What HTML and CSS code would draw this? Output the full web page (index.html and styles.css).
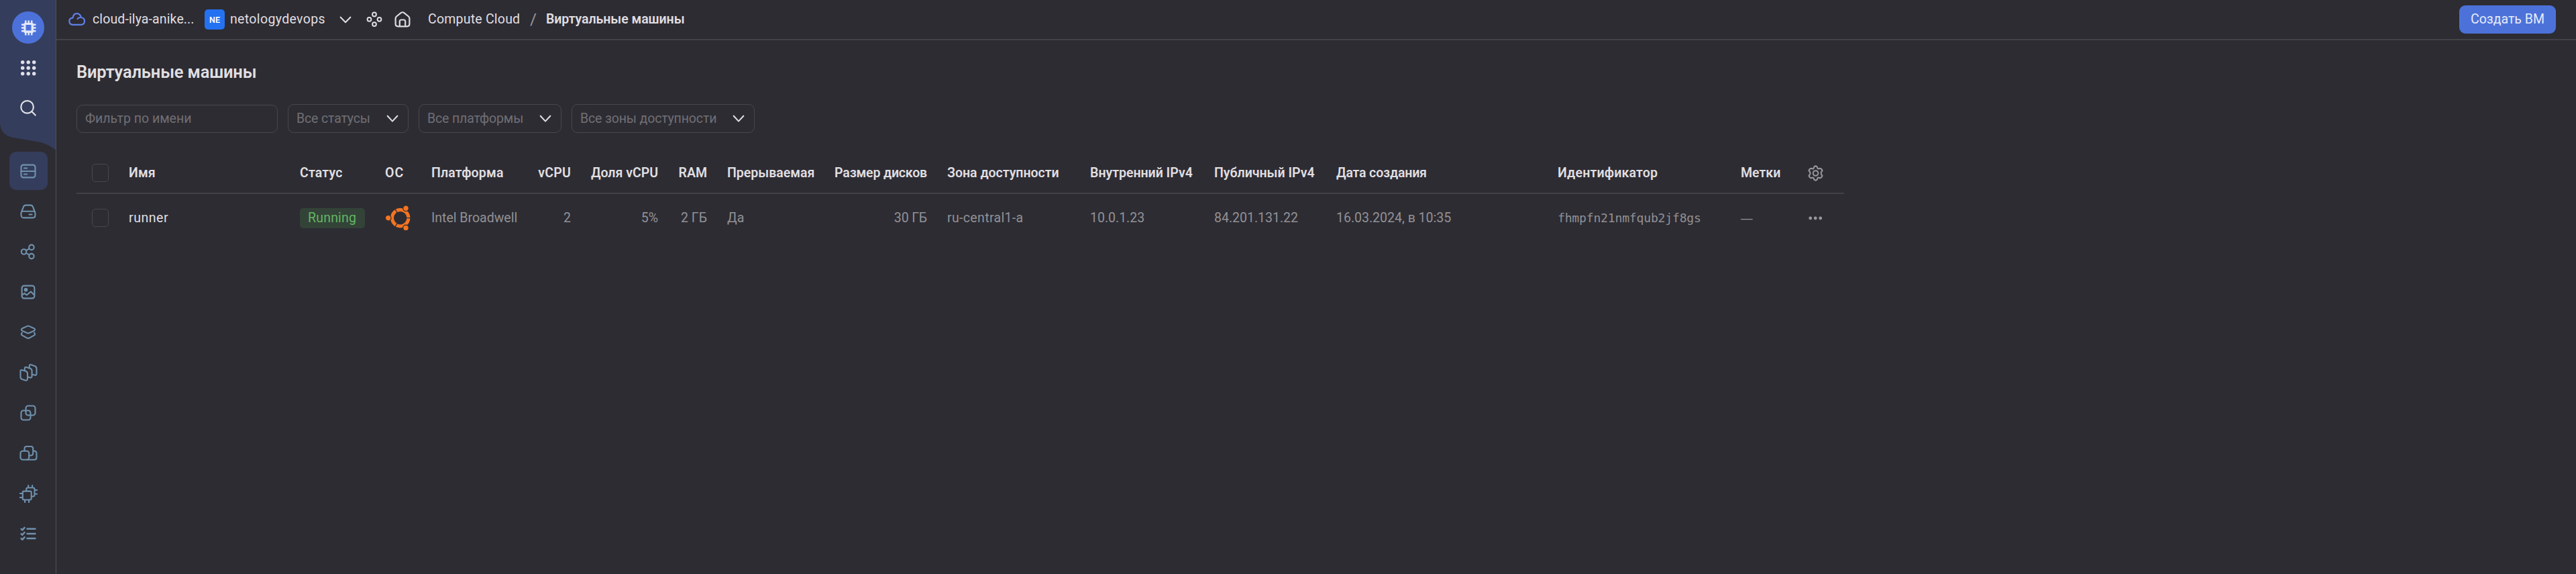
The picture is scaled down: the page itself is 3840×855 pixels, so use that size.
FILE: index.html
```html
<!DOCTYPE html>
<html lang="ru">
<head>
<meta charset="utf-8">
<title>Виртуальные машины</title>
<link rel="stylesheet" href="styles.css">
</head>
<body>
<div class="app">
  <aside class="sidebar">
    <svg class="sidebar-shape" width="83" height="224" viewBox="0 0 83 224"><path fill="#353d5c" d="M0 0H83V223C76 218 68 213.500 58 211.500L20 205C8 203 0 195 0 183Z"/></svg>
    <div class="nav-item nav-logo">
      <svg width="48" height="48" viewBox="0 0 48 48"><circle cx="24" cy="24" r="24" fill="#4c72d9"/><path fill="#e4e8f7" fill-rule="evenodd" d="M19 13.500h2.500V17h2V13.500H26V17h2V13.500h2.500V17.200Q32 17.500 32 18.500H35.500V21H32v2.200h3.500v2.600H32V28h3.500v2.500H32Q32 32 30.500 32V35.500H28V32H26v3.500H23.500V32h-2v3.500H19V32Q17.400 32 17.400 30.500H14V28h3.400V25.800H14V23.200h3.400V21H14V18.500h3.400Q17.400 17 19 17ZM20.500 20v8.500h8V20Z"/></svg>
    </div>
    <div class="nav-item nav-top">
      <svg width="24" height="24" viewBox="0 0 24 24" fill="#e0e1e8"><circle cx="3.700" cy="3.700" r="2.700"/><circle cx="12.200" cy="3.700" r="2.700"/><circle cx="20.700" cy="3.700" r="2.700"/><circle cx="3.700" cy="12.200" r="2.700"/><circle cx="12.200" cy="12.200" r="2.700"/><circle cx="20.700" cy="12.200" r="2.700"/><circle cx="3.700" cy="20.700" r="2.700"/><circle cx="12.200" cy="20.700" r="2.700"/><circle cx="20.700" cy="20.700" r="2.700"/></svg>
    </div>
    <div class="nav-item nav-top">
      <svg width="24" height="24" viewBox="0 0 24 24" fill="none" stroke="#e0e1e8" stroke-width="2.200" stroke-linecap="round"><circle cx="10.600" cy="10.400" r="9.300"/><path d="M17.500 17.300L22.700 22.500"/></svg>
    </div>
    <nav class="nav">
      <div class="nav-item nav-active"><svg class="icon" viewBox="0 0 16 16"><rect x="1" y="1.750" width="14" height="12.500" rx="2.250"/><path d="M1 8H15M4 5H6.800M4 11H6.800"/></svg></div>
      <div class="nav-item"><svg class="icon" viewBox="0 0 16 16"><path d="M1.300 8.500L3.400 3.300Q4 1.750 5.500 1.750h5Q12 1.750 12.600 3.300L14.700 8.500Q15 9.300 15 10.200V11.500Q15 14.250 12.500 14.250h-9Q1 14.250 1 11.500V10.200Q1 9.300 1.300 8.500ZM1.700 7.800H14.300M9 11H11.800"/></svg></div>
      <div class="nav-item"><svg class="icon" viewBox="0 0 16 16"><circle cx="3.700" cy="8" r="2.500"/><circle cx="11.300" cy="3.600" r="2.500"/><circle cx="11.300" cy="12.400" r="2.500"/><path d="M5.900 6.700L9.100 4.900M5.900 9.300L9.100 11.100"/></svg></div>
      <div class="nav-item"><svg class="icon" viewBox="0 0 16 16"><rect x="1.750" y="1.750" width="12.500" height="12.500" rx="2.250"/><circle cx="5.700" cy="5.700" r="1.200" class="solid"/><path d="M2 11L4.300 9.300L6.500 11L10.700 7.600L14 10.800"/></svg></div>
      <div class="nav-item"><svg class="icon" viewBox="0 0 16 16"><path d="M7 1.900Q8 1.500 9 1.900L14 4.200Q15.500 5.300 14 6.400L9 8.700Q8 9.100 7 8.700L2 6.400Q.5 5.300 2 4.200ZM2 8.400Q.5 9.900 2 10.900L7 13.700Q8 14.100 9 13.700L14 10.900Q15.500 9.900 14 8.400"/></svg></div>
      <div class="nav-item"><svg class="icon icon-wide" viewBox="0 0 18 18"><path d="M2.600 6.100L6.100 7.200Q8 7.800 8 9.500V14.500Q8 17 5.800 16.300L2.700 15.300Q1 14.700 1 13V7.300Q1 5.600 2.600 6.100ZM5.200 6.500V4.700Q5.200 2.800 7 3.300L10.600 4.500Q12.400 5.200 12.400 7V12Q12.400 14 10.800 13.700L8.300 13M9.900 4V2Q9.900.4 11.500.9L15.200 2.100Q17 2.800 17 4.500V9.500Q17 11.500 15.300 11.200L12.700 10.500"/></svg></div>
      <div class="nav-item"><svg class="icon" viewBox="0 0 16 16"><rect x="5.700" y="1" width="9.300" height="9.300" rx="2.200"/><rect x="1" y="5.700" width="9.300" height="9.300" rx="2.200"/></svg></div>
      <div class="nav-item"><svg class="icon icon-wide" viewBox="0 0 18 18"><rect x="1" y="6.500" width="8.500" height="8.700" rx="2.200"/><path d="M5 6.300V4.200Q5 2 7.200 2H11.300Q13.500 2 13.500 4.200V8.500Q13.500 11 11.300 11H9.700M13.700 6.500H14.500Q17 6.500 17 9V13Q17 15.200 14.800 15.200H7.500"/></svg></div>
      <div class="nav-item"><svg class="icon icon-wide" viewBox="0 0 18 18"><rect x="3.200" y="6.400" width="8.600" height="8.600" rx="1.300"/><path d="M6.800 6.200V4.500Q6.800 3 8.300 3H13.500Q15 3 15 4.500V10Q15 11.700 13.300 11.700H12M8.800 3V.7M12.800 3V.7M15.200 5.300H17.500M15.200 9.200H17.500M3 8.700H.6M3 12.700H.6M5.400 15.200V17.500M9.400 15.200V17.500"/></svg></div>
      <div class="nav-item"><svg class="icon" viewBox="0 0 16 16"><path stroke-width="1.600" d="M7 3.200H15M7 8H15M7 12.700H15M1.100 3.300L2.200 4.400L4.400 1.900M1.100 8.100L2.200 9.200L4.400 6.700M1.100 12.800L2.200 13.900L4.400 11.400"/></svg></div>
    </nav>
  </aside>
  <div class="main">
    <header class="topbar">
      <svg class="cloud" width="26" height="20" viewBox="0 0 26 20" fill="none" stroke="#6080e8" stroke-width="2.200" stroke-linecap="round" stroke-linejoin="round"><path d="M6.500 7.700Q7.500 1.200 12.500 1.200Q17.500 1.200 18.800 7Q24 7.500 24 12.500Q24 17.800 18.500 17.800H6.500Q1.300 17.800 1.300 12.600Q1.300 8 6.500 7.700ZM18.500 7Q14.500 6.800 13.500 9.200"/></svg>
      <span class="org">cloud-ilya-anike...</span>
      <span class="badge">NE</span>
      <span class="folder">netologydevops</span>
      <svg class="folder-arrow" width="18" height="11" viewBox="0 0 18 11"><path class="arrow" d="M1.700 1.700L9 9.200L16.300 1.700"/></svg>
      <svg class="services" width="24" height="24" viewBox="0 0 24 24" fill="none" stroke="#dddcde" stroke-width="2"><circle cx="12" cy="4.500" r="2.900"/><circle cx="4.500" cy="11.800" r="2.900"/><circle cx="19.500" cy="11.800" r="2.900"/><circle cx="12" cy="19.100" r="2.900"/></svg>
      <svg class="home" width="24" height="24" viewBox="0 0 24 24" fill="none" stroke="#dddcde" stroke-width="2.200" stroke-linejoin="round"><path d="M1.600 10.500Q1.600 8.700 3 7.500L10 1.900Q12 .6 14 1.900L21 7.500Q22.400 8.700 22.400 10.500V18.500Q22.400 22.300 18.600 22.300H5.400Q1.600 22.300 1.600 18.500ZM7.800 22V15Q7.800 12.500 10.300 12.500H13.700Q16.200 12.500 16.200 15V22"/></svg>
      <span class="crumb">Compute Cloud</span>
      <span class="slash">/</span>
      <span class="crumb-current">Виртуальные машины</span>
      <button class="create">Создать ВМ</button>
    </header>
    <main class="content">
      <h1 class="title">Виртуальные машины</h1>
      <div class="filters">
        <div class="input">Фильтр по имени</div>
        <div class="select select-status"><span>Все статусы</span><svg width="18" height="12" viewBox="0 0 18 12"><path class="arrow" d="M1.700 1.700L9 9.600L16.300 1.700"/></svg></div>
        <div class="select select-platform"><span>Все платформы</span><svg width="18" height="12" viewBox="0 0 18 12"><path class="arrow" d="M1.700 1.700L9 9.600L16.300 1.700"/></svg></div>
        <div class="select select-zone"><span>Все зоны доступности</span><svg width="18" height="12" viewBox="0 0 18 12"><path class="arrow" d="M1.700 1.700L9 9.600L16.300 1.700"/></svg></div>
      </div>
      <div class="table">
        <div class="row head">
          <div class="check"><span class="box"></span></div>
          <div class="spaced">Имя</div><div class="spaced">Статус</div><div class="os">ОС</div><div class="spaced">Платформа</div>
          <div class="num spaced">vCPU</div><div class="num">Доля vCPU</div><div class="num">RAM</div>
          <div class="pad">Прерываемая</div><div class="num tight">Размер дисков</div><div class="pad">Зона доступности</div>
          <div class="pad">Внутренний IPv4</div><div class="pad">Публичный IPv4</div><div class="pad tight">Дата создания</div>
          <div class="pad spaced">Идентификатор</div><div class="pad">Метки</div>
          <div class="pad"><svg class="gear" width="23" height="24" viewBox="0 0 23 24" fill="none" stroke="#98979b" stroke-width="2" stroke-linejoin="round"><path d="M9.300 2.400Q11.500.4 13.700 2.400L14.500 5Q15 5.400 15.600 5.500L18.200 4.800Q21 5.600 21.500 8.400L19.700 10.500V13.500L21.500 15.600Q21 18.400 18.200 19.200L15.600 18.500Q15 18.600 14.500 19L13.700 21.600Q11.500 23.600 9.300 21.600L8.500 19Q8 18.600 7.400 18.500L4.800 19.200Q2 18.400 1.500 15.600L3.300 13.500V10.500L1.500 8.400Q2 5.600 4.800 4.800L7.400 5.500Q8 5.400 8.500 5Z"/><circle cx="11.500" cy="12" r="3.800"/></svg></div>
        </div>
        <div class="row">
          <div class="check"><span class="box"></span></div>
          <div class="name">runner</div><div><span class="status">Running</span></div>
          <div><svg class="ubuntu" width="38" height="38" viewBox="0 0 38 38"><circle cx="22.700" cy="18.700" r="12.200" fill="none" stroke="#f47421" stroke-width="5"/><path stroke="#2d2c33" stroke-width="1.300" d="M31 18.700H39M18.500 11.500L14.600 4.700M18.500 25.900L14.600 32.700"/><g fill="#f47421" stroke="#2d2c33" stroke-width="1.200"><circle cx="4.700" cy="18.700" r="4.300"/><circle cx="31" cy="4.200" r="4.300"/><circle cx="31" cy="33.400" r="4.300"/></g></svg></div>
          <div>Intel Broadwell</div><div class="num">2</div><div class="num">5%</div><div class="num">2 ГБ</div>
          <div class="pad">Да</div><div class="num tight">30 ГБ</div><div class="pad zone">ru-central1-a</div>
          <div class="pad">10.0.1.23</div><div class="pad">84.201.131.22</div><div class="pad">16.03.2024, в 10:35</div>
          <div class="pad id">fhmpfn21nmfqub2jf8gs</div><div class="pad dash">—</div>
          <div class="pad"><svg width="23" height="6" viewBox="0 0 23 6" fill="#98979b"><circle cx="3.700" cy="3" r="2.400"/><circle cx="11.200" cy="3" r="2.400"/><circle cx="18.700" cy="3" r="2.400"/></svg></div>
        </div>
      </div>
    </main>
  </div>
</div>
</body>
</html>
```
FILE: styles.css
```css
* { box-sizing: border-box; }
body {
  margin: 0;
  background: #2d2c33;
  color: #e0dfe1;
  font: 19.5px/30px Roboto, "Liberation Sans", sans-serif;
}
svg { display: block; flex: none; }
.app { display: flex; height: 855px; }

.sidebar {
  position: relative;
  width: 84px;
  flex: none;
  border-right: 1px solid #515056;
  display: flex;
  flex-direction: column;
  padding-top: 11px;
}
.sidebar-shape { position: absolute; left: 0; top: 0; }
.nav-item {
  position: relative;
  height: 60px;
  padding-left: 1px;
  display: flex;
  align-items: center;
  justify-content: center;
}
.nav { padding-top: 34px; }
.nav-active::before {
  content: "";
  position: absolute;
  left: 14px;
  top: 1px;
  width: 57px;
  height: 57px;
  border-radius: 10px;
  background: #353d5c;
}
.icon {
  position: relative;
  width: 24px;
  height: 24px;
  fill: none;
  stroke: #6f91ad;
  stroke-width: 1.4;
  stroke-linecap: round;
  stroke-linejoin: round;
}
.icon-wide { width: 27px; height: 27px; }
.solid { fill: #6f91ad; }

.main { flex: 1; min-width: 0; }
.topbar {
  height: 60px;
  border-bottom: 2px solid #434248;
  display: flex;
  align-items: center;
  padding: 0 30px 0 18px;
  white-space: nowrap;
}
.org { width: 155px; margin: 0 12px 0 10px; letter-spacing: .12px; }
.badge {
  width: 30px;
  height: 30px;
  border-radius: 5px;
  background: #2472f2;
  color: #fff;
  font-size: 12.5px;
  font-weight: 600;
  text-align: center;
  line-height: 31px;
}
.folder { width: 163px; margin-left: 8px; letter-spacing: .35px; }
.arrow {
  fill: none;
  stroke: #dddcde;
  stroke-width: 2.1;
  stroke-linecap: round;
  stroke-linejoin: round;
}
.services { margin-left: 22px; }
.home { margin-left: 18px; }
.crumb { width: 152px; margin-left: 26px; letter-spacing: .22px; }
.slash { width: 24px; color: #98979b; font-size: 24px; }
.crumb-current { font-weight: 600; letter-spacing: -.05px; }
.create {
  margin-left: auto;
  width: 144px;
  height: 42px;
  border: 0;
  border-radius: 9px;
  background: #4c72d9;
  color: #e6ebfa;
  font: inherit;
  padding: 0;
}

.content { padding: 29px 30px 0; }
.title { margin: 0; font-size: 25.5px; line-height: 36px; font-weight: 600; letter-spacing: -.16px; }
.filters { display: flex; align-items: center; gap: 15px; margin-top: 30px; height: 43px; }
.input, .select {
  height: 43px;
  border: 1.5px solid #48474d;
  border-radius: 9px;
  color: #706f74;
  padding: 0 12px;
  display: flex;
  align-items: center;
  justify-content: space-between;
  white-space: nowrap;
}
.input { width: 300px; height: 42px; }
.select { letter-spacing: -.14px; padding-right: 14px; }
.select-status { width: 180px; }
.select-platform { width: 213px; }
.select-zone { width: 273px; }

.table { width: 2635px; margin-top: 30px; }
.row {
  display: grid;
  grid-template-columns: 78px 255px 127px 69px 158px 50px 130px 73px 189px 139px 213px 185px 182px 330px 273px 100px 84px;
  align-items: center;
  height: 71px;
  color: #929195;
  white-space: nowrap;
}
.head {
  height: 61px;
  border-bottom: 2px solid #434248;
  color: #e0dfe1;
  font-weight: 600;
}
.check { padding-left: 23px; }
.box {
  display: block;
  width: 25px;
  height: 27px;
  border: 1.5px solid #48474d;
  border-radius: 5px;
}
.spaced { letter-spacing: .2px; }
.tight { letter-spacing: -.15px; }
.os { letter-spacing: 1px; }
.num { text-align: right; }
.pad { padding-left: 30px; }
.name { color: #e0dfe1; letter-spacing: .55px; }
.zone { letter-spacing: .35px; }
.status {
  display: block;
  width: 97px;
  height: 30px;
  padding-left: 12px;
  border-radius: 5px;
  background: #344338;
  color: #62b763;
  letter-spacing: .2px;
}
.id { font-family: "DejaVu Sans Mono", monospace; font-size: 18px; letter-spacing: -.15px; }
.dash { font-family: "Liberation Sans", sans-serif; font-size: 17.5px; }
```
